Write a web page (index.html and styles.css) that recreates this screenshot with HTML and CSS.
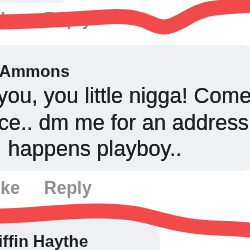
FILE: index.html
```html
<!DOCTYPE html>
<html lang="en">
<head>
  <meta charset="UTF-8">
  <title>Comments</title>
  <meta name="viewport" content="width=device-width, initial-scale=1.0">
  <link rel="stylesheet" href="styles.css">
</head>
<body>
  <div class="thread">
    <div class="prev-bubble"></div>

    <div class="actions actions-1">
      <span class="act like">Like</span>
      <span class="act">Reply</span>
    </div>

    <div class="bubble bubble-1">
      <div class="name name-ammons">Ammons</div>
      <div class="line line-1">you, you little nigga! Come</div>
      <div class="line line-2">ce.. dm me for an address</div>
      <div class="line line-3">happens playboy..</div>
    </div>

    <div class="actions actions-2">
      <span class="act like">Like</span>
      <span class="act">Reply</span>
    </div>

    <div class="bubble bubble-2">
      <div class="name name-griffin">Griffin Haythe</div>
    </div>

    <!-- red marker scribbles over the names -->
    <svg class="scribble" width="250" height="250" viewBox="0 0 250 250">
      <path d="M-6,22 C30,22 60,20 105,17 S150,28 165,27 S192,10 215,8 S245,5 256,5" />
      <path d="M-6,216 C30,217 60,210 100,211 S140,215 175,223 S225,226 256,231" />
    </svg>
  </div>
</body>
</html>
```

FILE: styles.css
```css
* {
  box-sizing: border-box;
}

body {
  margin: 0;
  background-color: #fff;
  font-family: "Liberation Sans", Arial, sans-serif;
  overflow: hidden;
}

.thread {
  position: relative;
  width: 250px;
  height: 250px;
  overflow: hidden;
}

.prev-bubble {
  width: 64px;
  height: 3px;
  background-color: #eff0f3;
  border-bottom-right-radius: 3px;
}

.actions {
  display: flex;
  gap: 24px;
  margin-top: 7px;
  margin-left: -15px;
  font-size: 17.5px;
  line-height: 20px;
  font-weight: bold;
  color: #8b8e93;
  filter: blur(0.35px);
}

.actions-1 {
  margin-top: 6px;
}

.bubble {
  margin-left: -40px;
  width: 300px;
  padding: 16px 0 8px 40px;
  background-color: #eff0f3;
  border-radius: 18px;
  color: #1f2023;
  filter: blur(0.35px);
}

.bubble-1 {
  margin-top: 16px;
}

.bubble-2 {
  margin-top: 23px;
  width: 200px;
  padding-top: 10px;
  height: 60px;
}

.name {
  font-size: 16.5px;
  line-height: 20px;
  font-weight: bold;
  color: #1c1d20;
  margin-bottom: 2px;
  white-space: nowrap;
}

.name-ammons {
  margin-left: -1px;
}

.name-griffin {
  margin-left: -21px;
}

.line {
  font-size: 21.6px;
  line-height: 26.5px;
  white-space: nowrap;
  text-shadow: 0 0 0.6px #1f2023;
}

.line-1 {
  margin-left: -3px;
}

.line-2 {
  margin-left: -2px;
}

.line-3 {
  margin-left: 8px;
}

.scribble {
  position: absolute;
  left: 0;
  top: 0;
  fill: none;
  stroke: #f24a4a;
  stroke-width: 15;
  stroke-linecap: round;
}
```
